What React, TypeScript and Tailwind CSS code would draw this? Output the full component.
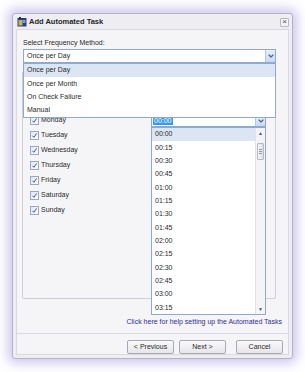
import { ChevronDown } from "lucide-react";

const methods = ["Once per Day", "Once per Month", "On Check Failure", "Manual"];
const days = ["Monday", "Tuesday", "Wednesday", "Thursday", "Friday", "Saturday", "Sunday"];
const times = [
  "00:00", "00:15", "00:30", "00:45", "01:00", "01:15", "01:30",
  "01:45", "02:00", "02:15", "02:30", "02:45", "03:00", "03:15",
];

function Check() {
  return (
    <span className="w-[9px] h-[9px] border border-[#9aa8c0] bg-gradient-to-br from-[#e4e7ee] to-[#fbfbfd] flex items-center justify-center">
      <svg width="7" height="7" viewBox="0 0 7 7">
        <path d="M1.5 3.8 L2.9 5.3 L5.6 1.4" stroke="#3a5aa8" strokeWidth="1" fill="none" />
      </svg>
    </span>
  );
}

function ArrowBtn() {
  return (
    <span className="w-[10px] h-full bg-gradient-to-b from-[#e6eefb] to-[#c9d9f5] border-l border-[#b4c6e6] flex items-center justify-center">
      <ChevronDown size={8} strokeWidth={3.5} className="text-[#4d6185]" />
    </span>
  );
}

export default function App() {
  return (
    <div
      className="w-[305px] h-[372px] bg-white pt-[13px] pl-[12px] text-[#2a2a2a]"
      style={{ fontFamily: '"Liberation Sans", Arial, sans-serif' }}
    >
      <div className="w-[281px] h-[346px] flex flex-col bg-[#eeedf2] border border-[#b4b3cc] rounded-[3px] shadow-[0_0_12px_4px_rgba(130,120,210,0.42)]">
        {/* title bar */}
        <div className="h-[15px] flex items-center pl-[4px] pr-[3px] pt-[1px]">
          <svg width="10" height="10" viewBox="0 0 10 10">
            <rect x="0.5" y="1" width="9" height="8.5" fill="#2c3f7a" />
            <rect x="1.5" y="3" width="4" height="5.5" fill="#c6b35a" />
            <rect x="5.5" y="3" width="3" height="3" fill="#6fa0d8" />
            <rect x="2" y="0" width="2" height="2" fill="#1d2d5a" />
          </svg>
          <span className="ml-[2px] text-[7.5px] font-bold text-[#262626] leading-none">Add Automated Task</span>
          <span className="ml-auto w-[9px] h-[9px] border border-[#b8b8c4] bg-[#f3f3f6] rounded-[1px] flex items-center justify-center text-[8px] leading-none text-[#444]">
            ×
          </span>
        </div>

        {/* client area */}
        <div className="relative flex-1 mx-[3px] mb-[3px] bg-[#f5f4f7] border border-[#dad9e3] flex flex-col pl-[6px] pr-[5px]">
          <div className="pt-[8px] text-[7px] leading-[10px]">Select Frequency Method:</div>
          <div className="mt-[1px] w-[253px] h-[14px] bg-white border border-[#90aacd] flex items-center text-[7px]">
            <span className="flex-1 pl-[3px]">Once per Day</span>
            <ArrowBtn />
          </div>

          {/* frequency dropdown */}
          <div className="absolute left-[6px] top-[33px] w-[253px] bg-white border border-[#90aacd] z-20 text-[7px]">
            {methods.map((m, i) => (
              <div
                key={m}
                className={`h-[13.3px] flex items-center pl-[3px] ${i === 0 ? "bg-[#dce6f3]" : ""}`}
              >
                {m}
              </div>
            ))}
          </div>

          {/* group box */}
          <div className="relative mt-[8px] ml-[-1px] w-[254px] h-[228px] border border-[#cfcedc] rounded-[2px] flex pt-[41px] pl-[7px]">
            <div className="flex flex-col w-[121px]">
              {days.map((d) => (
                <div key={d} className="h-[15px] flex items-center gap-[2px] text-[7px]">
                  <Check />
                  <span>{d}</span>
                </div>
              ))}
            </div>
            <div className="relative">
              <div className="mt-[2px] w-[115px] h-[12px] bg-white border border-[#90aacd] flex items-center text-[7px]">
                <span className="ml-[1px] bg-[#3399ff] text-white leading-[8px] px-[1px]">00:00</span>
                <span className="flex-1" />
                <ArrowBtn />
              </div>
              {/* time list */}
              <div className="absolute left-0 top-[14px] w-[115px] h-[188px] bg-white border border-[#90aacd] z-10 flex text-[7px]">
                <div className="flex-1 flex flex-col">
                  {times.map((t, i) => (
                    <div
                      key={t}
                      className={`h-[13.33px] shrink-0 flex items-center pl-[3px] ${i === 0 ? "bg-[#dce6f3]" : ""}`}
                    >
                      {t}
                    </div>
                  ))}
                </div>
                <div className="w-[10px] bg-[#f4f4f6] border-l border-[#e2e2ea] flex flex-col items-center">
                  <span className="h-[10px] flex items-center text-[5px] text-[#555] leading-none">▲</span>
                  <span className="mt-[5px] w-[7px] h-[17px] border border-[#b9b9c4] rounded-[1px] bg-gradient-to-r from-[#f6f6f8] to-[#dedee6] flex flex-col items-center justify-center gap-[1px]">
                    <span className="w-[3px] h-px bg-[#999]" />
                    <span className="w-[3px] h-px bg-[#999]" />
                    <span className="w-[3px] h-px bg-[#999]" />
                  </span>
                  <span className="mt-auto h-[10px] flex items-center text-[5px] text-[#555] leading-none">▼</span>
                </div>
              </div>
            </div>
          </div>

          <div className="mt-[18px] self-end text-[7px] leading-[10px] text-[#2b2f9e] pr-[1px]">
            Click here for help setting up the Automated Tasks
          </div>

          <div className="mt-[6px] ml-[-6px] mr-[-5px] border-t border-[#d8d7e2]" />

          <div className="mt-[6px] flex justify-end gap-[5px] text-[7px]">
            {["< Previous", "Next >"].map((b) => (
              <span key={b} className="w-[47px] h-[14px] border border-[#a9a9b6] rounded-[2px] bg-gradient-to-b from-[#fafafa] to-[#e6e6ea] flex items-center justify-center">
                {b}
              </span>
            ))}
            <span className="ml-[5px] w-[47px] h-[14px] border border-[#a9a9b6] rounded-[2px] bg-gradient-to-b from-[#fafafa] to-[#e6e6ea] flex items-center justify-center">
              Cancel
            </span>
          </div>
        </div>
      </div>
    </div>
  );
}
